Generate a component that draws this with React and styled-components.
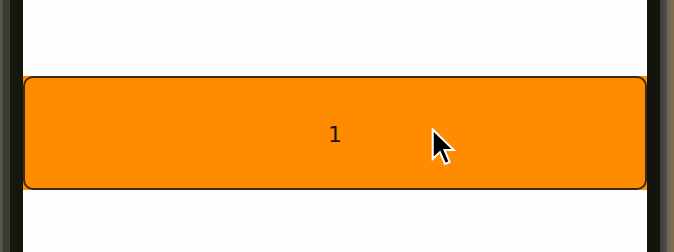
import React from "react";
import styled, { createGlobalStyle } from "styled-components";

const Global = createGlobalStyle`
  html, body { margin: 0; padding: 0; background: #fefefe; }
  body { font-family: "Liberation Sans", Arial, sans-serif; }
`;

const Page = styled.div`
  display: flex;
  width: 674px;
  height: 252px;
  overflow: hidden;
`;

const Frame = styled.div`
  flex: 0 0 ${(p) => p.$w}px;
  background: ${(p) => p.$bg};
`;

const Main = styled.div`
  flex: 1;
  position: relative;
  background: #fefefe;
  padding-top: 76px;
  box-sizing: border-box;
`;

const Slot = styled.div`
  background: #ff8c00;
  height: 114px;
`;

const Tile = styled.div`
  box-sizing: border-box;
  height: 100%;
  background: #ff8c00;
  border: 2px solid #3a2a14;
  border-radius: 10px;
  display: flex;
  align-items: center;
  justify-content: center;
  font-family: "DejaVu Sans", "Liberation Sans", sans-serif;
  font-size: 22px;
  color: #1a1208;
  padding-top: 2px;
`;

const Cursor = styled.svg`
  position: absolute;
  left: 408px;
  top: 128px;
  width: 25px;
  height: 39px;
`;

export default function App() {
  return (
    <>
      <Global />
      <Page>
        <Frame
          $w={23}
          $bg="linear-gradient(90deg, #5a5a50 0px, #5a5a50 2px, #3c3c34 3px, #3c3c34 10px, #16160f 10px)"
        />
        <Main>
          <Slot>
            <Tile>1</Tile>
          </Slot>
          <Cursor viewBox="0 0 24 38">
            <path
              d="M1.5 1.5 L1.5 30 L8.5 23.5 L13.5 35 L18 33 L13 21.5 L22 21.5 Z"
              fill="#000"
              stroke="#fff"
              strokeWidth="2"
              strokeLinejoin="miter"
            />
          </Cursor>
        </Main>
        <Frame
          $w={27}
          $bg="linear-gradient(90deg, #14140f 0px, #14140f 13px, #3e3e38 13px, #4c4c46 19px, #6a6a60 21px, #6a6a60 23px, #7d6c4c 24px)"
        />
      </Page>
    </>
  );
}
